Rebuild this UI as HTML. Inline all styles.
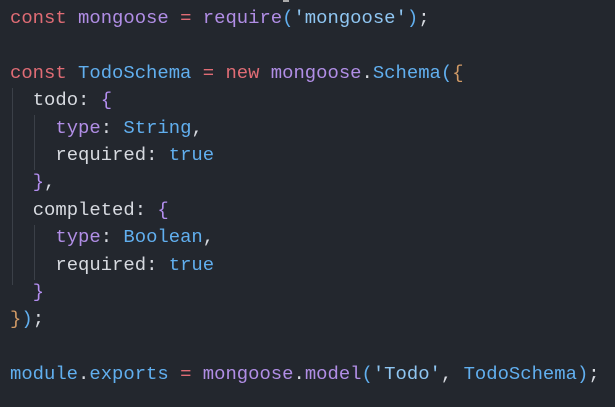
<!DOCTYPE html>
<html><head><style>
html,body{margin:0;padding:0;background:#23272e;width:615px;height:407px;overflow:hidden}
pre{margin:0;position:absolute;left:10px;top:5px;font-family:"Liberation Mono",monospace;font-size:18.9px;line-height:27.4px;color:#d7dae0}
.k{color:#e06c75}.v{color:#b18ee6}.f{color:#b18ee6}.c{color:#61afef}.s{color:#8fc6f2}.p{color:#61afef}.o{color:#d19a66}.b{color:#b48ef0}.w{color:#d7dae0}
.g{position:absolute;width:1px;background:#3b4048}
</style></head><body>
<div class="g" style="left:12px;top:88px;height:197px"></div>
<div class="g" style="left:34px;top:115px;height:55px"></div>
<div class="g" style="left:34px;top:225px;height:55px"></div>
<div style="position:absolute;left:283px;top:0;width:6px;height:2px;background:#aaa"></div>
<pre><span class="k">const</span> <span class="v">mongoose</span> <span class="k">=</span> <span class="f">require</span><span class="p">(</span><span class="s">'mongoose'</span><span class="p">)</span>;

<span class="k">const</span> <span class="c">TodoSchema</span> <span class="k">=</span> <span class="k">new</span> <span class="v">mongoose</span>.<span class="c">Schema</span><span class="p">(</span><span class="o">{</span>
  <span class="w">todo</span>: <span class="b">{</span>
    <span class="v">type</span>: <span class="c">String</span>,
    <span class="w">required</span>: <span class="c">true</span>
  <span class="b">}</span>,
  <span class="w">completed</span>: <span class="b">{</span>
    <span class="v">type</span>: <span class="c">Boolean</span>,
    <span class="w">required</span>: <span class="c">true</span>
  <span class="b">}</span>
<span class="o">}</span><span class="p">)</span>;

<span class="c">module</span>.<span class="c">exports</span> <span class="k">=</span> <span class="v">mongoose</span>.<span class="f">model</span><span class="p">(</span><span class="s">'Todo'</span>, <span class="c">TodoSchema</span><span class="p">)</span>;</pre>
</body></html>
